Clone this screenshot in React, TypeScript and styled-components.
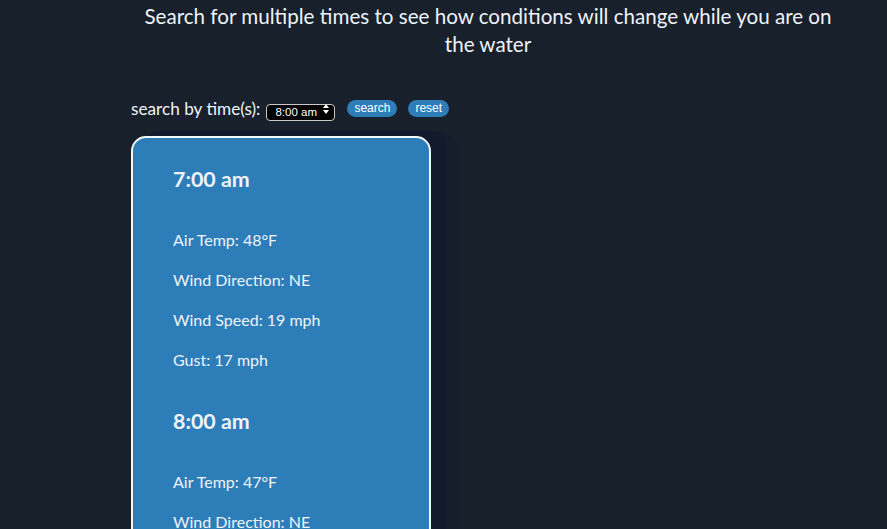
import React from "react";
import styled, { createGlobalStyle } from "styled-components";

const Global = createGlobalStyle`
  html, body { margin: 0; padding: 0; background: #18202b; }
  body { font-family: "Lato", "DejaVu Sans", sans-serif; color: #eef3f8; }
`;

const Main = styled.main`
  width: 714px;
  margin-left: 131px;
  display: flex;
  flex-direction: column;
  align-items: flex-start;
`;

const Heading = styled.h1`
  margin: 2px 0 0;
  width: 100%;
  text-align: center;
  font-size: 20.6px;
  font-weight: 400;
  line-height: 28px;
`;

const SearchRow = styled.form`
  margin-top: 38px;
  height: 24px;
  display: flex;
  align-items: center;
`;

const Label = styled.label`
  font-size: 17.2px;
  margin-right: 6px;
`;

const SelectWrap = styled.div`
  position: relative;
  width: 69px;
  height: 17px;
  margin-right: 12px;
`;

const Select = styled.select`
  appearance: none;
  width: 100%;
  height: 100%;
  box-sizing: border-box;
  background: #000;
  color: #fff;
  border: 1px solid #c8c8c8;
  border-radius: 4px;
  font-family: "Liberation Sans", Arial, sans-serif;
  font-size: 11.5px;
  padding: 0 0 0 8px;
  line-height: 15px;
`;

const Arrows = styled.svg`
  position: absolute;
  right: 6px;
  top: 4px;
  pointer-events: none;
`;

const Pill = styled.button`
  height: 17px;
  padding: 0 7px;
  border: none;
  border-radius: 9px;
  background: #2d7db8;
  color: #fff;
  font-family: "Liberation Sans", Arial, sans-serif;
  font-size: 12px;
  line-height: 17px;
  margin-right: 11px;
`;

const Card = styled.section`
  margin-top: 16px;
  width: 300px;
  box-sizing: border-box;
  background: #2d7db8;
  border: 2px solid #f4f8fb;
  border-radius: 15px;
  padding: 29px 40px 40px;
  box-shadow: 14px -3px 0 2px #131a2e, 24px -3px 0 2px #161e2c;
  display: flex;
  flex-direction: column;
  gap: 37px;
`;

const Forecast = styled.div`
  display: flex;
  flex-direction: column;
  gap: 16px;
`;

const Time = styled.h2`
  margin: 0 0 21px;
  font-size: 21.4px;
  font-weight: 700;
  line-height: 24px;
`;

const Item = styled.p`
  margin: 0;
  font-size: 16px;
  line-height: 24px;
`;

const data = [
  { time: "7:00 am", temp: 48, dir: "NE", speed: 19, gust: 17 },
  { time: "8:00 am", temp: 47, dir: "NE", speed: 18, gust: 16 },
];

export default function App() {
  return (
    <>
      <Global />
      <Main>
        <Heading>
          Search for multiple times to see how conditions will change while you are on the water
        </Heading>
        <SearchRow onSubmit={(e) => e.preventDefault()}>
          <Label htmlFor="time">search by time(s):</Label>
          <SelectWrap>
            <Select id="time" defaultValue="8">
              <option value="7">7:00 am</option>
              <option value="8">8:00 am</option>
            </Select>
            <Arrows width="6" height="10" viewBox="0 0 6 10">
              <path d="M3 0L6 4H0z" fill="#fff" />
              <path d="M3 10L6 6H0z" fill="#fff" />
            </Arrows>
          </SelectWrap>
          <Pill type="submit">search</Pill>
          <Pill type="button">reset</Pill>
        </SearchRow>
        <Card>
          {data.map((d) => (
            <Forecast key={d.time}>
              <Time>{d.time}</Time>
              <Item>Air Temp: {d.temp}°F</Item>
              <Item>Wind Direction: {d.dir}</Item>
              <Item>Wind Speed: {d.speed} mph</Item>
              <Item>Gust: {d.gust} mph</Item>
            </Forecast>
          ))}
        </Card>
      </Main>
    </>
  );
}
